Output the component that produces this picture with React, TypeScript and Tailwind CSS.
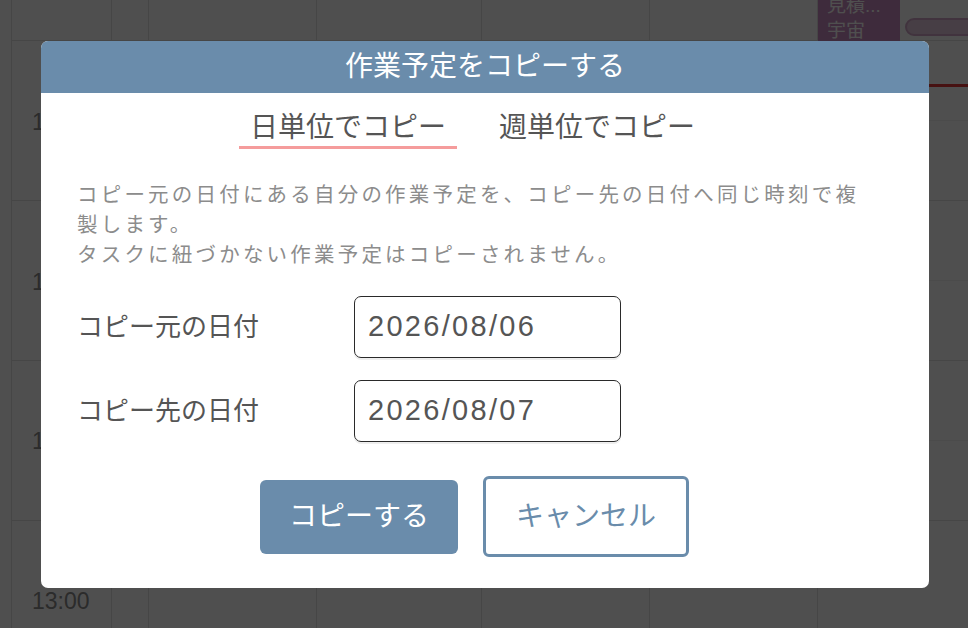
import React from "react";

const hours = [
  { label: "10:00", top: "top-[113px]" },
  { label: "11:00", top: "top-[273px]" },
  { label: "12:00", top: "top-[432px]" },
  { label: "13:00", top: "top-[592px]" },
];

function DayColumn({ width, today = false }: { width: string; today?: boolean }) {
  return (
    <div className={`relative h-full border-l border-[#e2e2e2] ${width}`}>
      {[40, 200, 360, 520].map((y) => (
        <div
          key={y}
          className="absolute left-0 right-0 h-px bg-[#e2e2e2]"
          style={{ top: y }}
        />
      ))}
      {today &&
        [120, 280, 440].map((y) => (
          <div
            key={y}
            className="absolute left-0 right-0 h-px bg-[#f0f0f0]"
            style={{ top: y }}
          />
        ))}
    </div>
  );
}

function Calendar() {
  return (
    <div className="flex h-full">
      <div className="w-[11px] shrink-0" />
      <div className="relative w-[100px] shrink-0 border-l border-[#e2e2e2]">
        {[40, 200, 360, 520].map((y) => (
          <div
            key={y}
            className="absolute left-0 right-0 h-px bg-[#e2e2e2]"
            style={{ top: y }}
          />
        ))}
        {hours.map((h) => (
          <span
            key={h.label}
            className={`absolute left-[20px] ${h.top} text-[23px] leading-[18px] text-[#8a8a8a]`}
          >
            {h.label}
          </span>
        ))}
      </div>
      <DayColumn width="w-[37px]" />
      <DayColumn width="w-[168px]" />
      <DayColumn width="w-[165px]" />
      <DayColumn width="w-[168px]" />
      <DayColumn width="w-[168px]" />
      <div className="relative w-[151px] border-l border-[#e2e2e2]">
        {[40, 200, 360, 520].map((y) => (
          <div
            key={y}
            className="absolute left-0 right-0 h-px bg-[#e2e2e2]"
            style={{ top: y }}
          />
        ))}
        {[120, 280, 440].map((y) => (
          <div
            key={y}
            className="absolute left-0 right-0 h-px bg-[#f2f2f2]"
            style={{ top: y }}
          />
        ))}
        <div className="absolute left-0 top-0 w-[82px] h-[44px] bg-[#c98cc0] px-[9px] text-[19px] leading-[25px] text-[#fff] overflow-hidden">
          <div className="-mt-[7px]">見積...</div>
          <div>宇宙</div>
        </div>
        <div className="absolute left-[87px] top-[18px] w-[80px] h-[18px] rounded-full border-2 border-[#d1a6c8] bg-[#e4c8dd]" />
        <div className="absolute left-0 right-0 top-[84px] h-[3px] bg-[#e53a3a]" />
      </div>
    </div>
  );
}

export default function App() {
  return (
    <div
      className="relative w-[968px] h-[628px] overflow-hidden bg-white"
      style={{ fontFamily: '"Liberation Sans", "Noto Sans CJK JP", sans-serif' }}
    >
      <Calendar />
      <div className="absolute inset-0 bg-[rgba(0,0,0,0.69)]" />

      <div className="absolute left-[41px] top-[41px] w-[888px] h-[547px] rounded-[7px] bg-white overflow-hidden flex flex-col">
        <div className="h-[52px] bg-[#6a8cab] flex items-center justify-center text-white text-[28px] leading-none">
          作業予定をコピーする
        </div>

        <div className="flex pl-[198px] pt-[17px] gap-[31px]">
          <button className="px-[11px] h-[39px] border-b-[3px] border-[#f59c9c] text-[28px] leading-[36px] text-[#555]">
            日単位でコピー
          </button>
          <button className="px-[11px] h-[39px] border-b-[3px] border-transparent text-[28px] leading-[36px] text-[#555]">
            週単位でコピー
          </button>
        </div>

        <p className="mt-[31px] px-[36px] text-[20.5px] leading-[30px] tracking-[3.2px] text-[#8c8c8c]">
          コピー元の日付にある自分の作業予定を、コピー先の日付へ同じ時刻で複
          <br />
          製します。
          <br />
          タスクに紐づかない作業予定はコピーされません。
        </p>

        <div className="mt-[26px] px-[36px] flex flex-col gap-[22px]">
          <div className="flex items-center">
            <label className="w-[277px] text-[26px] text-[#555]">コピー元の日付</label>
            <div className="w-[267px] h-[62px] rounded-[7px] border border-[#2a2a2a] shadow-[0_2px_0_#eeeeee] flex items-center pl-[13px] text-[29px] tracking-[2.3px] text-[#555]">
              2026/08/06
            </div>
          </div>
          <div className="flex items-center">
            <label className="w-[277px] text-[26px] text-[#555]">コピー先の日付</label>
            <div className="w-[267px] h-[62px] rounded-[7px] border border-[#2a2a2a] shadow-[0_2px_0_#eeeeee] flex items-center pl-[13px] text-[29px] tracking-[2.3px] text-[#555]">
              2026/08/07
            </div>
          </div>
        </div>

        <div className="mt-[34px] pl-[219px] flex items-center gap-[25px]">
          <button className="w-[198px] h-[74px] rounded-[6px] bg-[#6a8cab] text-white text-[28px]">
            コピーする
          </button>
          <button className="w-[206px] h-[81px] rounded-[6px] border-[3px] border-[#6a8cab] bg-white text-[#6a8cab] text-[28px]">
            キャンセル
          </button>
        </div>
      </div>
    </div>
  );
}
